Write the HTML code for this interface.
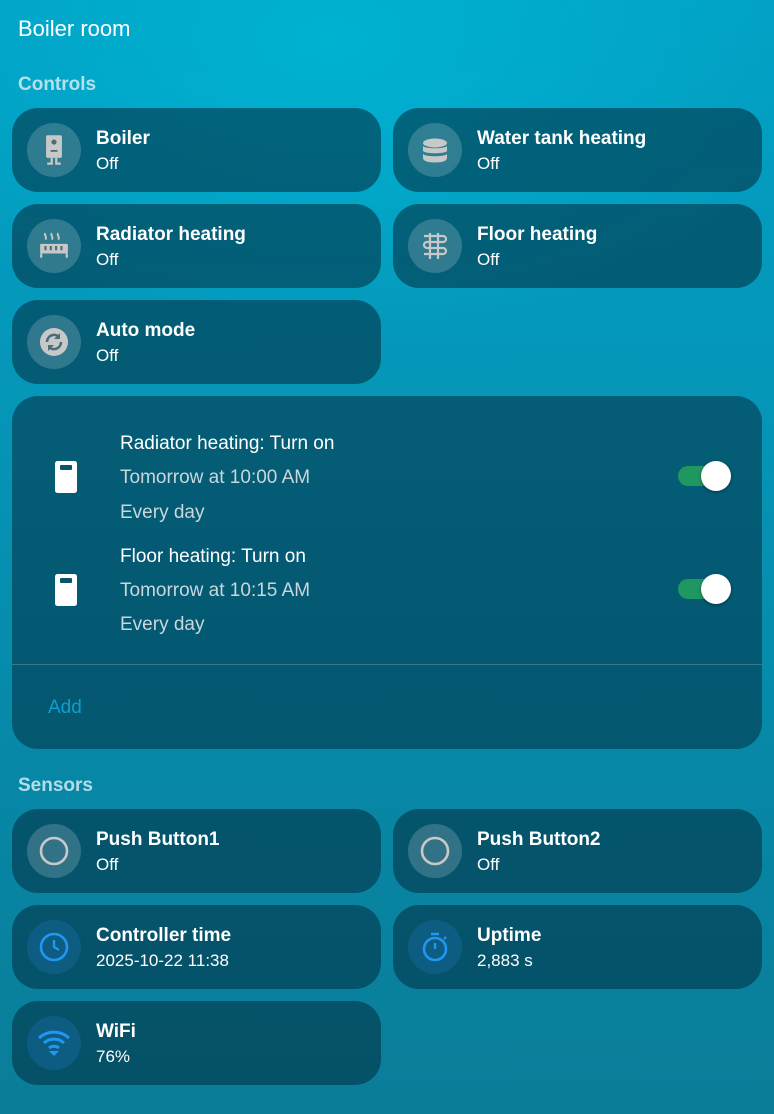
<!DOCTYPE html>
<html><head><meta charset="utf-8"><style>
*{box-sizing:border-box;margin:0;padding:0}
body{width:774px;height:1114px;overflow:hidden;font-family:"Liberation Sans",sans-serif;color:#fff;
background:radial-gradient(ellipse 500px 300px at 330px 40px,#00b2d2 0%,rgba(0,170,205,0) 100%),linear-gradient(180deg,#01a0c4 0%,#0596b8 35%,#0787a6 70%,#0a7d98 100%);position:relative}
.t{position:absolute;left:18px;top:16px;font-size:22px}
.h{position:absolute;left:18px;font-size:19px;color:#d3ebf2;font-weight:bold;opacity:.85}
.c{position:absolute;width:369px;height:84px;border-radius:26px;background:rgba(3,55,75,.62)}
.i{position:absolute;left:15px;top:15px;width:54px;height:54px;border-radius:50%;background:rgba(255,255,255,.18);display:flex;align-items:center;justify-content:center}
.i.b{background:rgba(20,100,150,.55)}
.n{position:absolute;left:84px;top:20px;font-size:19px;font-weight:bold}
.s{position:absolute;left:84px;top:46px;font-size:17px}
.sc{position:absolute;left:12px;top:396px;width:750px;height:353px;border-radius:26px;background:rgba(3,55,75,.6)}
.l{position:absolute;font-size:19px;color:#fff}
.g{color:#c8d7dc}
.tg{position:absolute;width:38px;height:20px;border-radius:10px;background:#1f9760}
.tg:after{content:"";position:absolute;right:-15px;top:-5px;width:30px;height:30px;border-radius:50%;background:#fff;box-shadow:0 1px 3px rgba(0,0,0,.4)}
</style></head><body>
<div class="t">Boiler room</div>
<div class="h" style="top:74px">Controls</div>

<div class="c" style="left:12px;top:108px"><div class="i"><svg width="30" height="34" viewBox="0 0 26 30"><rect x="6" y="2" width="14" height="20" rx="1.5" fill="#c8c8c8"/><circle cx="13" cy="8" r="2.3" fill="#4a6d78"/><rect x="10" y="15" width="6" height="1.6" fill="#4a6d78"/><path d="M10 22v4H7v2h5v-6M16 22v4h3v2h-5v-6" fill="#c8c8c8"/></svg></div><div class="n">Boiler</div><div class="s">Off</div></div>
<div class="c" style="left:393px;top:108px"><div class="i"><svg width="26" height="26" viewBox="0 0 26 26"><ellipse cx="13" cy="6" rx="12" ry="4.5" fill="#c8c8c8"/><path d="M1 9c2 3 22 3 24 0v5c-2 3-22 3-24 0zM1 17c2 3 22 3 24 0v4c0 3-5 4.5-12 4.5S1 24 1 21z" fill="#c8c8c8"/></svg></div><div class="n">Water tank heating</div><div class="s">Off</div></div>

<div class="c" style="left:12px;top:204px"><div class="i"><svg width="32" height="30" viewBox="0 0 30 28"><path d="M7 2c-2 2 2 3 0 6M13 2c-2 2 2 3 0 6M19 2c-2 2 2 3 0 6" stroke="#c8c8c8" stroke-width="1.8" fill="none"/><rect x="2" y="12" width="26" height="9" rx="1" fill="#c8c8c8"/><path d="M2 21v4h2v-4M26 21v4h2v-4" fill="#c8c8c8"/><g fill="#4a6d78"><rect x="6" y="14" width="2" height="4"/><rect x="11" y="14" width="2" height="4"/><rect x="16" y="14" width="2" height="4"/><rect x="21" y="14" width="2" height="4"/></g></svg></div><div class="n">Radiator heating</div><div class="s">Off</div></div>
<div class="c" style="left:393px;top:204px"><div class="i"><svg width="28" height="28" viewBox="0 0 28 28"><path d="M3 4h19a3 3 0 0 1 0 6H6a3 3 0 0 0 0 6h16a3 3 0 0 1 0 6H3M9 1v26M17 1v26" stroke="#c8c8c8" stroke-width="2.2" fill="none"/></svg></div><div class="n">Floor heating</div><div class="s">Off</div></div>

<div class="c" style="left:12px;top:300px"><div class="i"><svg width="30" height="30" viewBox="0 0 30 30"><circle cx="15" cy="15" r="14" fill="#c8c8c8"/><path d="M8 15a7 7 0 0 1 12-5M22 15a7 7 0 0 1-12 5" stroke="#4a6d78" stroke-width="2.6" fill="none"/><path d="M21 6v6h-6zM9 24v-6h6z" fill="#4a6d78"/></svg></div><div class="n">Auto mode</div><div class="s">Off</div></div>

<div class="sc">
<svg style="position:absolute;left:42px;top:64px" width="24" height="34" viewBox="0 0 24 34"><rect x="1" y="1" width="22" height="32" rx="2.5" fill="#fff"/><rect x="6" y="5" width="12" height="5" rx="1" fill="#0a5568"/></svg>
<div class="l" style="left:108px;top:37px">Radiator heating: Turn on</div>
<div class="l g" style="left:108px;top:71px">Tomorrow at 10:00 AM</div>
<div class="l g" style="left:108px;top:106px">Every day</div>
<div class="tg" style="left:666px;top:70px"></div>
<svg style="position:absolute;left:42px;top:177px" width="24" height="34" viewBox="0 0 24 34"><rect x="1" y="1" width="22" height="32" rx="2.5" fill="#fff"/><rect x="6" y="5" width="12" height="5" rx="1" fill="#0a5568"/></svg>
<div class="l" style="left:108px;top:150px">Floor heating: Turn on</div>
<div class="l g" style="left:108px;top:184px">Tomorrow at 10:15 AM</div>
<div class="l g" style="left:108px;top:218px">Every day</div>
<div class="tg" style="left:666px;top:183px"></div>
<div style="position:absolute;left:0;right:0;top:268px;height:1px;background:rgba(255,255,255,.2)"></div>
<div class="l" style="left:36px;top:301px;color:#0aa0cc">Add</div>
</div>

<div class="h" style="top:775px">Sensors</div>
<div class="c" style="left:12px;top:809px"><div class="i"><svg width="32" height="32"><circle cx="16" cy="16" r="13" stroke="#c8c8c8" stroke-width="2.6" fill="none"/></svg></div><div class="n">Push Button1</div><div class="s">Off</div></div>
<div class="c" style="left:393px;top:809px"><div class="i"><svg width="32" height="32"><circle cx="16" cy="16" r="13" stroke="#c8c8c8" stroke-width="2.6" fill="none"/></svg></div><div class="n">Push Button2</div><div class="s">Off</div></div>
<div class="c" style="left:12px;top:905px"><div class="i b"><svg width="32" height="32"><circle cx="16" cy="16" r="13" stroke="#2196f3" stroke-width="2.6" fill="none"/><path d="M16 9v7l5 3" stroke="#2196f3" stroke-width="2.4" fill="none"/></svg></div><div class="n">Controller time</div><div class="s">2025-10-22 11:38</div></div>
<div class="c" style="left:393px;top:905px"><div class="i b"><svg width="32" height="32"><circle cx="16" cy="18" r="11" stroke="#2196f3" stroke-width="2.6" fill="none"/><path d="M12 3h8M16 12v6M25 8l2-2" stroke="#2196f3" stroke-width="2.4" fill="none"/></svg></div><div class="n">Uptime</div><div class="s">2,883 s</div></div>
<div class="c" style="left:12px;top:1001px"><div class="i b"><svg width="34" height="30" viewBox="0 0 34 30"><path d="M2 10a22 22 0 0 1 30 0M7 15a15 15 0 0 1 20 0M12 20a8 8 0 0 1 10 0" stroke="#2196f3" stroke-width="3" fill="none"/><path d="M12 23h10l-5 5z" fill="#2196f3"/></svg></div><div class="n">WiFi</div><div class="s">76%</div></div>
</body></html>
